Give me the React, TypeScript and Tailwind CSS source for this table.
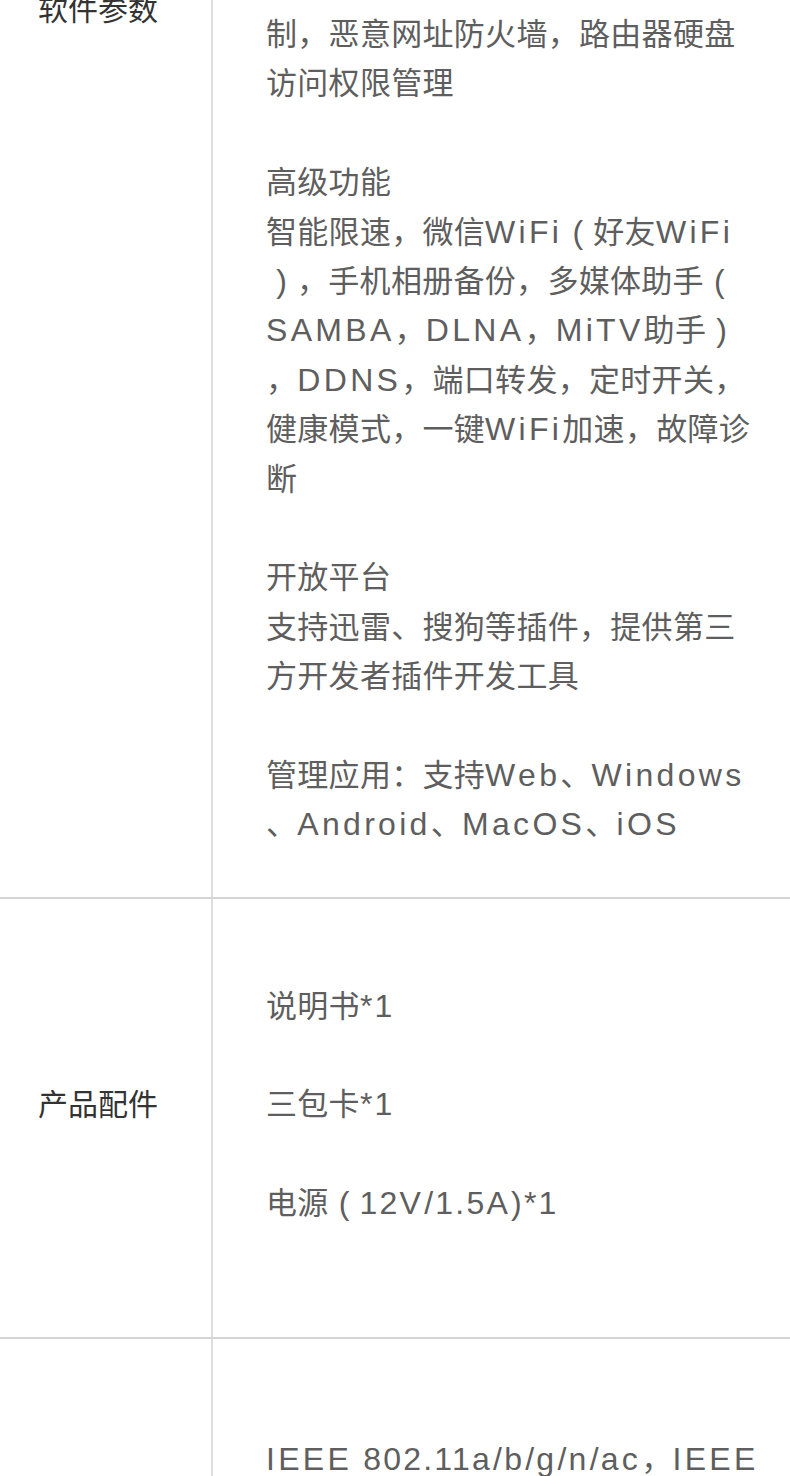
import React from "react";

const FONT = '"Liberation Sans", "Noto Sans CJK SC", sans-serif';

function Rich({ text }: { text: string }) {
  const parts = text.split(/([A-Za-z]+|[0-9./*() ]+|[（）])/).filter((p) => p !== "");
  return (
    <>
      {parts.map((p, i) => {
        if (p === "（" || p === "）") {
          return (
            <span key={i} className="inline-block w-[31px] text-center text-[32px]">
              {p === "（" ? "(" : ")"}
            </span>
          );
        }
        if (/^[A-Za-z]+$/.test(p)) {
          return (
            <span key={i} className="text-[32px] tracking-[3.3px]">
              {p}
            </span>
          );
        }
        if (/^[0-9./*() ]+$/.test(p)) {
          return (
            <span key={i} className="text-[32px] tracking-[2.2px]">
              {p}
            </span>
          );
        }
        return (
          <span key={i} className="tracking-[0.3px]">
            {p}
          </span>
        );
      })}
    </>
  );
}

function Lines({ lines }: { lines: string[] }) {
  return (
    <div className="text-[31px] leading-[49.4px] text-[#5e5e5e] whitespace-nowrap">
      {lines.map((l, i) => (
        <div key={i} className="h-[49.4px]">
          {l === "" ? "\u00a0" : <Rich text={l} />}
        </div>
      ))}
    </div>
  );
}

function Row({
  label,
  labelClass,
  contentClass,
  lines,
  border = true,
}: {
  label: string;
  labelClass: string;
  contentClass: string;
  lines: string[];
  border?: boolean;
}) {
  return (
    <div className={"flex " + (border ? "border-b-2 border-[#d4d4d4]" : "")}>
      <div className={"w-[213px] shrink-0 border-r-2 border-[#dedede] pl-[38px] " + labelClass}>
        <div className="text-[30px] leading-[49.4px] text-[#333333] whitespace-nowrap">{label}</div>
      </div>
      <div className={"flex-1 pl-[53px] " + contentClass}>
        <Lines lines={lines} />
      </div>
    </div>
  );
}

export default function App() {
  return (
    <div className="w-[790px] h-[1476px] overflow-hidden bg-white" style={{ fontFamily: FONT }}>
      <Row
        label="软件参数"
        labelClass="-mt-[15px]"
        contentClass="pt-[10px] pb-[47px]"
        lines={[
          "制，恶意网址防火墙，路由器硬盘",
          "访问权限管理",
          "",
          "高级功能",
          "智能限速，微信WiFi（好友WiFi",
          "），手机相册备份，多媒体助手（",
          "SAMBA，DLNA，MiTV助手）",
          "，DDNS，端口转发，定时开关，",
          "健康模式，一键WiFi加速，故障诊",
          "断",
          "",
          "开放平台",
          "支持迅雷、搜狗等插件，提供第三",
          "方开发者插件开发工具",
          "",
          "管理应用：支持Web、Windows",
          "、Android、MacOS、iOS",
        ]}
      />
      <Row
        label="产品配件"
        labelClass="pt-[181px]"
        contentClass="pt-[83px] pb-[108px]"
        lines={["说明书*1", "", "三包卡*1", "", "电源（12V/1.5A)*1"]}
      />
      <Row
        label=""
        labelClass=""
        contentClass="pt-[96px]"
        border={false}
        lines={["IEEE 802.11a/b/g/n/ac，IEEE", "802.3/3u/3ab"]}
      />
    </div>
  );
}
